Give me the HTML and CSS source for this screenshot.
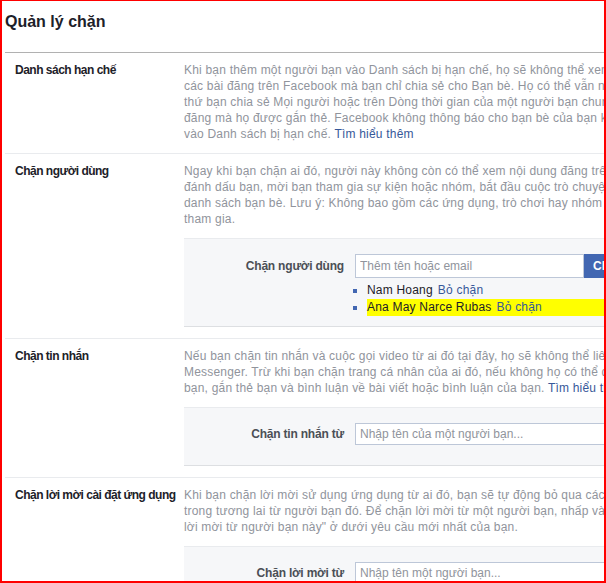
FILE: index.html
```html
<!DOCTYPE html>
<html lang="vi">
<head>
    <meta charset="UTF-8">
    <meta name="viewport" content="width=device-width, initial-scale=1.0">
    <title>Quản lý chặn</title>
    <link rel="stylesheet" href="styles.css">
</head>
<body>
    <div class="frame">
        <div class="panel">
            <h2 class="panel-title">Quản lý chặn</h2>

            <!-- Danh sách hạn chế -->
            <div class="section">
                <div class="section-label">Danh sách hạn chế</div>
                <div class="section-body">
                    <p class="desc">Khi bạn thêm một người bạn vào Danh sách bị hạn chế, họ sẽ không thể xem<br>các bài đăng trên Facebook mà bạn chỉ chia sẻ cho Bạn bè. Họ có thể vẫn nhìn thấy những<br>thứ bạn chia sẻ Mọi người hoặc trên Dòng thời gian của một người bạn chung và những bài<br>đăng mà họ được gắn thẻ. Facebook không thông báo cho bạn bè của bạn khi bạn thêm họ<br>vào Danh sách bị hạn chế. <a href="#">Tìm hiểu thêm</a></p>
                </div>
            </div>

            <!-- Chặn người dùng -->
            <div class="section">
                <div class="section-label">Chặn người dùng</div>
                <div class="section-body">
                    <p class="desc">Ngay khi bạn chặn ai đó, người này không còn có thể xem nội dung đăng trên dòng thời gian của bạn,<br>đánh dấu bạn, mời bạn tham gia sự kiện hoặc nhóm, bắt đầu cuộc trò chuyện với bạn hay thêm bạn vào<br>danh sách bạn bè. Lưu ý: Không bao gồm các ứng dụng, trò chơi hay nhóm mà cả bạn và người này cùng<br>tham gia.</p>
                    <div class="block-box block-box-list">
                        <div class="block-row">
                            <label class="block-label">Chặn người dùng</label>
                            <input class="block-input" type="text" placeholder="Thêm tên hoặc email">
                            <button class="block-button">Chặn</button>
                        </div>
                        <ul class="blocked-list">
                            <li>Nam Hoang<a class="unblock" href="#">Bỏ chặn</a></li>
                            <li class="highlight">Ana May Narce Rubas<a class="unblock" href="#">Bỏ chặn</a></li>
                        </ul>
                    </div>
                </div>
            </div>

            <!-- Chặn tin nhắn -->
            <div class="section">
                <div class="section-label">Chặn tin nhắn</div>
                <div class="section-body">
                    <p class="desc">Nếu bạn chặn tin nhắn và cuộc gọi video từ ai đó tại đây, họ sẽ không thể liên hệ với bạn trong<br>Messenger. Trừ khi bạn chặn trang cá nhân của ai đó, nếu không họ có thể đăng bài trên dòng thời gian của<br>bạn, gắn thẻ bạn và bình luận về bài viết hoặc bình luận của bạn. <a href="#">Tìm hiểu thêm</a></p>
                    <div class="block-box">
                        <div class="block-row">
                            <label class="block-label">Chặn tin nhắn từ</label>
                            <input class="block-input wide" type="text" placeholder="Nhập tên của một người bạn...">
                        </div>
                    </div>
                </div>
            </div>

            <!-- Chặn lời mời cài đặt ứng dụng -->
            <div class="section">
                <div class="section-label">Chặn lời mời cài đặt ứng dụng</div>
                <div class="section-body">
                    <p class="desc">Khi bạn chặn lời mời sử dụng ứng dụng từ ai đó, bạn sẽ tự động bỏ qua các yêu cầu ứng dụng<br>trong tương lai từ người bạn đó. Để chặn lời mời từ một người bạn, nhấp vào liên kết "Bỏ qua tất cả<br>lời mời từ người bạn này" ở dưới yêu cầu mới nhất của bạn.</p>
                    <div class="block-box">
                        <div class="block-row">
                            <label class="block-label">Chặn lời mời từ</label>
                            <input class="block-input wide" type="text" placeholder="Nhập tên một người bạn...">
                        </div>
                    </div>
                </div>
            </div>
        </div>
    </div>
</body>
</html>
```

FILE: styles.css
```css
body {
    margin: 0;
    font-family: "Liberation Sans", Arial, sans-serif;
    background-color: #fff;
    color: #1d2129;
}
.frame {
    width: 606px;
    height: 583px;
    box-sizing: border-box;
    border: 2px solid #f00;
    border-top-width: 1px;
    overflow: hidden;
}
.panel {
    width: 820px;
    margin-left: 3px;
}
.panel-title {
    margin: 0;
    padding: 11px 0 20px 0;
    font-size: 16px;
    line-height: 20px;
    font-weight: bold;
    color: #1d2129;
    border-bottom: 1px solid #b1b1b1;
}
.section {
    display: flex;
    padding: 9px 0 11px 10px;
    border-bottom: 1px solid #e9ebee;
}
.section-label {
    width: 169px;
    flex-shrink: 0;
    font-size: 12px;
    line-height: 16px;
    font-weight: bold;
    letter-spacing: -0.5px;
    color: #1d2129;
    white-space: nowrap;
}
.section-body {
    flex: 1;
}
.desc {
    margin: 0;
    font-size: 12px;
    line-height: 16px;
    letter-spacing: 0.2px;
    color: #90949c;
    white-space: nowrap;
}
.desc a {
    color: #365899;
    text-decoration: none;
}
.block-box {
    margin-top: 11px;
    background-color: #f6f7f9;
    border-top: 1px solid #e9ebee;
    border-bottom: 1px solid #dddfe2;
    padding: 15px 0 20px 0;
}
.block-box-list {
    padding-bottom: 10px;
}
.block-row {
    display: flex;
    align-items: center;
}
.block-label {
    width: 160px;
    margin-right: 11px;
    text-align: right;
    font-size: 12px;
    font-weight: bold;
    letter-spacing: -0.2px;
    color: #4b4f56;
}
.block-input {
    width: 229px;
    height: 24px;
    box-sizing: border-box;
    margin: 0;
    padding: 0 4px;
    border: 1px solid #bdc7d8;
    background-color: #fff;
    font-family: "Liberation Sans", Arial, sans-serif;
    font-size: 12px;
    color: #1d2129;
}
.block-input.wide {
    width: 330px;
    height: 22px;
}
.block-input::placeholder {
    color: #90949c;
}
.block-button {
    height: 24px;
    margin: 0;
    padding: 0 8px;
    background-color: #4267b2;
    border: 1px solid #4267b2;
    color: #fff;
    font-family: "Liberation Sans", Arial, sans-serif;
    font-size: 12px;
    font-weight: bold;
}
.blocked-list {
    list-style: square;
    margin: 4px 0 0 171px;
    padding-left: 12px;
}
.blocked-list li {
    font-size: 12px;
    line-height: 17px;
    letter-spacing: 0.2px;
    color: #1d2129;
}
.blocked-list li::marker {
    color: #4267b2;
}
.blocked-list li.highlight {
    background-color: #ffff00;
}
.unblock {
    margin-left: 5px;
    color: #365899;
    text-decoration: none;
}
```
